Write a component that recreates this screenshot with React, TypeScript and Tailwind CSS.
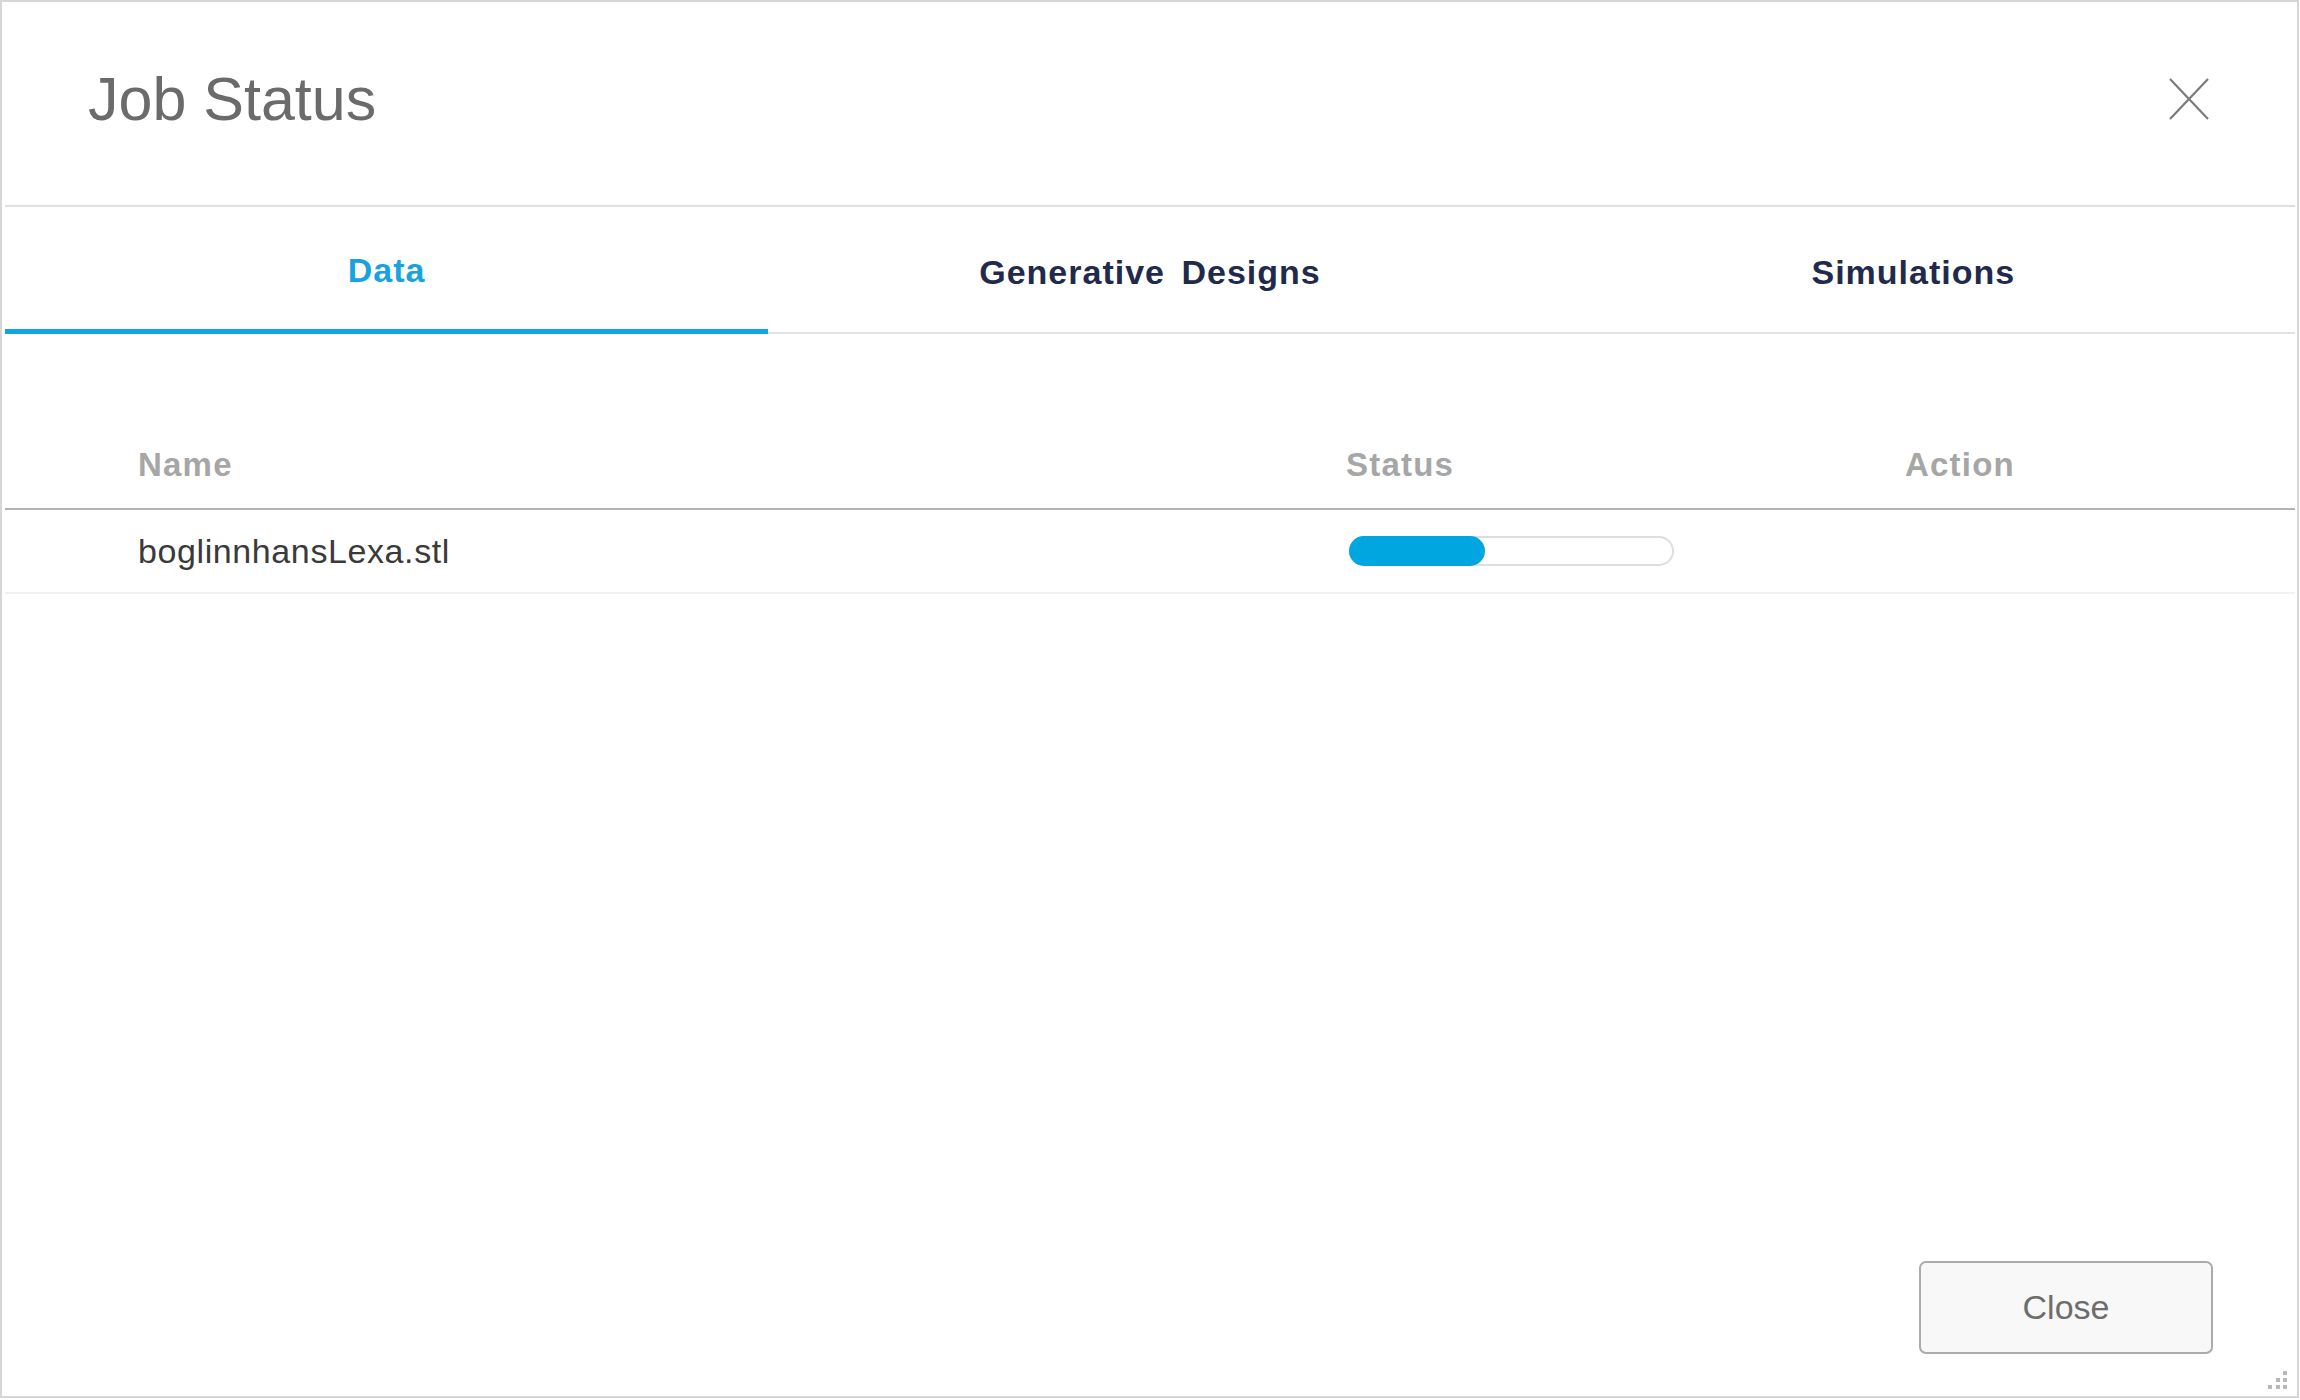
import React from 'react';

const tabs = ['Data', 'Generative Designs', 'Simulations'];

function CloseIcon() {
  return (
    <svg width="40" height="42" viewBox="0 0 40 42" fill="none">
      <path d="M1 1 L39 41 M39 1 L1 41" stroke="#7b7b7b" strokeWidth="2.2" />
    </svg>
  );
}

function ResizeGrip() {
  const dots = [
    [2, 0],
    [1, 1],
    [2, 1],
    [0, 2],
    [1, 2],
    [2, 2],
  ];
  return (
    <div className="absolute right-[10px] bottom-[7px] w-[19px] h-[18px]">
      {dots.map(([c, r], i) => (
        <span
          key={i}
          className="absolute w-[4px] h-[4px] bg-[#b8b8b8]"
          style={{ left: c * 7.5, top: r * 7 }}
        />
      ))}
    </div>
  );
}

export default function App() {
  const active = 0;
  const progress = 136;

  return (
    <div className="w-[2300px] h-[1400px] bg-white font-['Liberation_Sans',Arial,sans-serif]">
      <div className="relative w-[2299px] h-[1398px] border-2 border-[#d6d6d6] flex flex-col">
        <div className="ml-[3px] mr-[2px] flex flex-col flex-1">
          {/* header */}
          <div className="h-[205px] border-b-2 border-[#e0e0e0] flex items-center justify-between pl-[83px] pr-[86px] pb-[9px]">
            <h1 className="text-[61px] leading-none text-[#6b6b6b] font-normal">Job Status</h1>
            <CloseIcon />
          </div>

          {/* tabs */}
          <div className="grid grid-cols-3 h-[127px]">
            {tabs.map((tab, i) => (
              <div
                key={tab}
                className={
                  i === active
                    ? 'flex items-center justify-center pt-[5px] border-b-[5px] border-[#10a4e0] text-[#18a3df] text-[34px] font-bold tracking-[1px] [word-spacing:6px]'
                    : 'flex items-center justify-center pt-[5px] border-b-2 border-[#e3e3e3] text-[#1f2a4c] text-[34px] font-bold tracking-[1px] [word-spacing:6px]'
                }
              >
                {tab}
              </div>
            ))}
          </div>

          {/* table */}
          <div className="grid grid-cols-[1341px_559px_1fr] pt-[114px] pb-[27px] border-b-2 border-[#b3b3b3] text-[33px] leading-[33px] font-bold tracking-[1.2px] text-[#a6a6a6]">
            <div className="pl-[133px]">Name</div>
            <div>Status</div>
            <div>Action</div>
          </div>
          <div className="grid grid-cols-[1341px_559px_1fr] h-[84px] items-center border-b-2 border-[#f2f2f2]">
            <div className="pl-[133px] text-[34px] leading-[34px] tracking-[0.6px] text-[#3a3a3a]">
              boglinnhansLexa.stl
            </div>
            <div>
              <div className="relative ml-[3px] w-[325px] h-[30px] rounded-full border-2 border-[#dedede] bg-white">
                <div
                  className="absolute -left-[2px] -top-[2px] -bottom-[2px] rounded-full bg-[#00a6e0]"
                  style={{ width: progress }}
                />
              </div>
            </div>
            <div />
          </div>

          {/* footer */}
          <div className="flex-1 flex justify-end items-end pb-[42px] pr-[82px]">
            <button className="w-[294px] h-[93px] border-2 border-[#ababab] rounded-[7px] bg-[#f8f8f8] text-[34px] text-[#6d6d6d]">
              Close
            </button>
          </div>
        </div>
        <ResizeGrip />
      </div>
    </div>
  );
}
